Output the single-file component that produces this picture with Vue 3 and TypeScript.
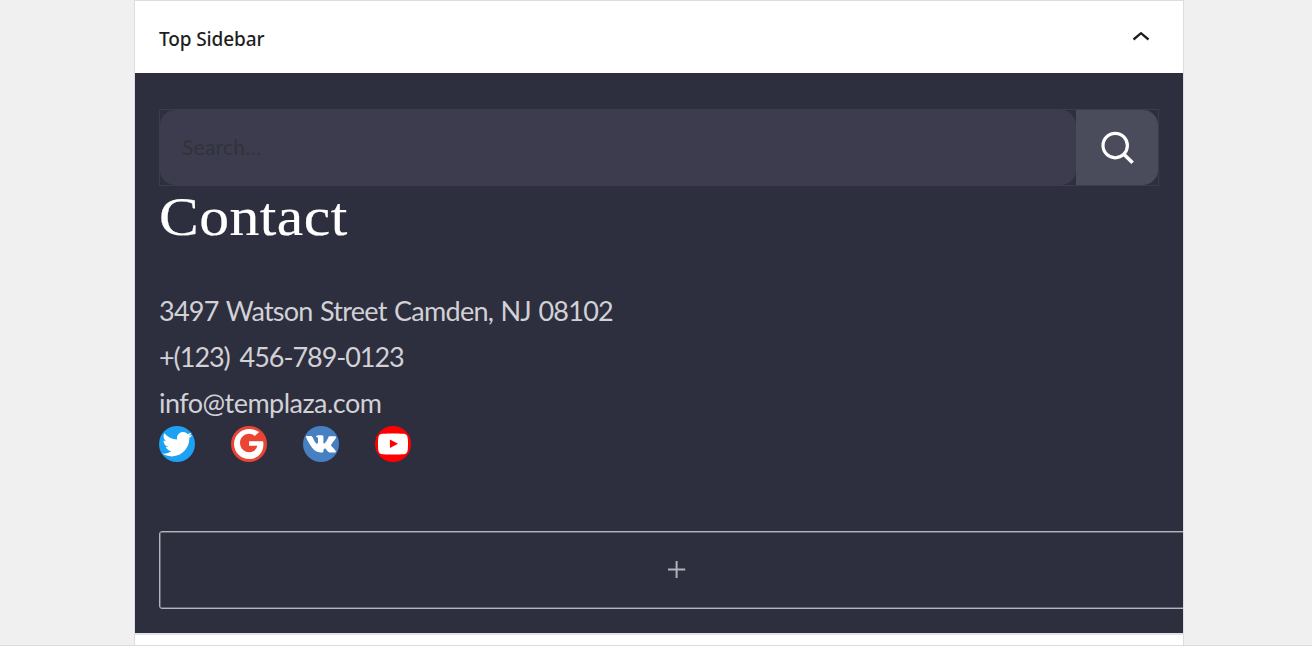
<script setup lang="ts">
interface Social {
  name: string
  color: string
  path: string
}

const contacts: { text: string; kind: string }[] = [
  { text: '3497 Watson Street Camden, NJ 08102', kind: 'address' },
  { text: '+(123) 456-789-0123', kind: 'phone' },
  { text: 'info@templaza.com', kind: 'email' },
]

const socials: Social[] = [
  {
    name: 'Twitter',
    color: '#1da1f2',
    path: 'M22.23,5.924c-0.736,0.326-1.527,0.547-2.357,0.646c0.847-0.508,1.498-1.312,1.804-2.27 c-0.793,0.47-1.671,0.812-2.606,0.996C18.324,4.498,17.257,4,16.077,4c-2.266,0-4.103,1.837-4.103,4.103 c0,0.322,0.036,0.635,0.106,0.935C8.67,8.867,5.647,7.234,3.623,4.751C3.27,5.357,3.067,6.062,3.067,6.814 c0,1.424,0.724,2.679,1.825,3.415c-0.673-0.021-1.305-0.206-1.859-0.513c0,0.017,0,0.034,0,0.052c0,1.988,1.414,3.647,3.292,4.023 c-0.344,0.094-0.707,0.144-1.081,0.144c-0.264,0-0.521-0.026-0.772-0.074c0.522,1.63,2.038,2.816,3.833,2.85 c-1.404,1.1-3.174,1.756-5.096,1.756c-0.331,0-0.658-0.019-0.979-0.057c1.816,1.164,3.973,1.843,6.29,1.843 c7.547,0,11.675-6.252,11.675-11.675c0-0.178-0.004-0.355-0.012-0.531C20.985,7.47,21.68,6.747,22.23,5.924z',
  },
  {
    name: 'Google',
    color: '#ea4434',
    path: 'M12.02,10.18v3.04v0h5.51c-0.26,1.57-1.67,4.22-5.5,4.22c-3.31,0-6.01-2.75-6.01-6.12s2.7-6.12,6.01-6.12 c1.87,0,3.13,0.8,3.85,1.48l2.84-2.76C16.99,2.99,14.73,2,12.03,2c-5.52,0-10,4.48-10,10s4.48,10,10,10c5.77,0,9.6-4.06,9.6-9.77 c0-0.83-0.11-1.42-0.25-2.05H12.02z',
  },
  {
    name: 'VK',
    color: '#4680c2',
    path: 'M22,7.1c0.2,0.4-0.4,1.5-1.6,3.1c-0.2,0.2-0.4,0.5-0.7,0.9c-0.5,0.7-0.9,1.1-0.9,1.4c-0.1,0.3-0.1,0.6,0.1,0.8 c0.1,0.1,0.4,0.4,0.8,0.9h0l0,0c1,0.9,1.6,1.7,2,2.3c0,0,0,0.1,0.1,0.1c0,0.1,0,0.1,0.1,0.3c0,0.1,0,0.2,0,0.4 c0,0.1-0.1,0.2-0.3,0.3c-0.1,0.1-0.4,0.1-0.6,0.1l-2.7,0c-0.2,0-0.4,0-0.6-0.1c-0.2-0.1-0.4-0.1-0.5-0.2l-0.2-0.1 c-0.2-0.1-0.5-0.4-0.7-0.7s-0.5-0.6-0.7-0.8c-0.2-0.2-0.4-0.4-0.6-0.6C14.8,15,14.6,15,14.4,15c0,0,0,0-0.1,0c0,0-0.1,0.1-0.2,0.2 c-0.1,0.1-0.2,0.2-0.2,0.3c-0.1,0.1-0.1,0.3-0.2,0.5c-0.1,0.2-0.1,0.5-0.1,0.8c0,0.1,0,0.2,0,0.3c0,0.1-0.1,0.2-0.1,0.2l0,0.1 c-0.1,0.1-0.3,0.2-0.6,0.2h-1.2c-0.5,0-1,0-1.5-0.2c-0.5-0.1-1-0.3-1.4-0.6s-0.7-0.5-1.1-0.7s-0.6-0.4-0.7-0.6l-0.3-0.3 c-0.1-0.1-0.2-0.2-0.3-0.3s-0.4-0.5-0.7-0.9s-0.7-1-1.1-1.6c-0.4-0.6-0.8-1.3-1.3-2.2C2.9,9.4,2.5,8.5,2.1,7.5C2,7.4,2,7.3,2,7.2 c0-0.1,0-0.1,0-0.2l0-0.1c0.1-0.1,0.3-0.2,0.6-0.2l2.9,0c0.1,0,0.2,0,0.2,0.1S5.9,6.9,5.9,7L6,7c0.1,0.1,0.2,0.2,0.3,0.3 c0.1,0.4,0.3,0.7,0.5,1.1c0.2,0.4,0.3,0.7,0.4,0.8l0.2,0.3c0.2,0.4,0.4,0.8,0.6,1.1c0.2,0.3,0.4,0.5,0.5,0.7s0.3,0.3,0.4,0.4 c0.1,0.1,0.3,0.1,0.4,0.1c0.1,0,0.2,0,0.3-0.1c0,0,0,0,0.1-0.1c0,0,0.1-0.1,0.1-0.2c0.1-0.1,0.1-0.3,0.1-0.5 c0-0.2,0.1-0.5,0.1-0.8c0-0.4,0-0.8,0-1.3c0-0.3,0-0.5-0.1-0.8c0-0.2-0.1-0.4-0.1-0.5L9.6,7.6C9.4,7.3,9.1,7.2,8.7,7.1 C8.6,7.1,8.6,7,8.7,6.9C8.9,6.7,9,6.6,9.1,6.5c0.4-0.2,1.2-0.3,2.5-0.3c0.6,0,1,0.1,1.4,0.1c0.1,0,0.3,0.1,0.3,0.1 c0.1,0.1,0.2,0.1,0.2,0.3c0,0.1,0.1,0.2,0.1,0.3s0,0.3,0,0.5c0,0.2,0,0.4,0,0.6c0,0.2,0,0.4,0,0.7c0,0.3,0,0.6,0,0.9 c0,0.1,0,0.2,0,0.4c0,0.2,0,0.4,0,0.5c0,0.1,0,0.3,0,0.4s0.1,0.3,0.1,0.4c0.1,0.1,0.1,0.2,0.2,0.3c0.1,0,0.1,0,0.2,0 c0.1,0,0.2,0,0.3-0.1c0.1-0.1,0.2-0.2,0.4-0.4s0.3-0.4,0.5-0.7c0.2-0.3,0.5-0.7,0.7-1.1c0.4-0.7,0.8-1.5,1.1-2.3 c0-0.1,0.1-0.1,0.1-0.2c0-0.1,0.1-0.1,0.1-0.1l0,0l0.1,0c0,0,0,0,0.1,0s0.2,0,0.2,0l3,0c0.3,0,0.5,0,0.7,0S21.9,7,21.9,7L22,7.1z',
  },
  {
    name: 'YouTube',
    color: '#ff0000',
    path: 'M21.8,8.001c0,0-0.195-1.378-0.795-1.985c-0.76-0.797-1.613-0.801-2.004-0.847c-2.799-0.202-6.997-0.202-6.997-0.202 h-0.009c0,0-4.198,0-6.997,0.202C4.608,5.216,3.756,5.22,2.995,6.016C2.395,6.623,2.2,8.001,2.2,8.001S2,9.62,2,11.238v1.517 c0,1.618,0.2,3.237,0.2,3.237s0.195,1.378,0.795,1.985c0.761,0.797,1.76,0.771,2.205,0.855c1.6,0.153,6.8,0.201,6.8,0.201 s4.203-0.006,7.001-0.209c0.391-0.047,1.243-0.051,2.004-0.847c0.6-0.607,0.795-1.985,0.795-1.985s0.2-1.618,0.2-3.237v-1.517 C22,9.62,21.8,8.001,21.8,8.001z M9.935,14.594l-0.001-5.62l5.404,2.82L9.935,14.594z',
  },
]
</script>

<template>
  <div class="page">
    <main class="panel">
      <header class="head">
        <h2 class="title">Top Sidebar</h2>
        <svg class="chevron" width="18" height="12" viewBox="0 0 18 12">
          <path d="M1.5 9.5L9 3.2l7.5 6.3" fill="none" stroke="#1e1e1e" stroke-width="2.3" />
        </svg>
      </header>
      <section class="area">
        <div class="search">
          <div class="field">Search…</div>
          <div class="slot">
            <div class="button">
              <svg width="36" height="36" viewBox="0 0 36 36" fill="none" stroke="#fff">
                <circle cx="16.2" cy="15.6" r="12.2" stroke-width="3.2" />
                <path d="M24.6 24l9 8.8" stroke-width="3.6" />
              </svg>
            </div>
          </div>
        </div>
        <h3 class="heading">Contact</h3>
        <div class="contacts">
          <div v-for="c in contacts" :key="c.kind" class="line">
            <span :class="c.kind">{{ c.text }}</span>
          </div>
        </div>
        <div class="socials">
          <span v-for="s in socials" :key="s.name" class="social" :style="{ background: s.color }">
            <svg width="36" height="36" viewBox="0 0 24 24" fill="#fff"><path :d="s.path" /></svg>
          </span>
        </div>
        <div class="appender">
          <svg width="20" height="20" viewBox="0 0 20 20" fill="none" stroke="#b2b2ba" stroke-width="2">
            <path d="M1 9.5h17.2M9.6 0.9v17.2" />
          </svg>
        </div>
      </section>
    </main>
  </div>
</template>

<style>
html,
body {
  background: #fff;
  overflow: hidden;
}
</style>

<style scoped>
.page {
  box-sizing: border-box;
  height: 646px;
  border-bottom: 1px solid #dcdcde;
  background: #f0f0f0;
  display: flex;
  padding-left: 134px;
}
.panel {
  box-sizing: border-box;
  width: 1050px;
  height: 645px;
  border: 1px solid #dddddf;
  border-bottom: 0;
  background: #fff;
}
.head {
  height: 72px;
  padding: 0 33px 0 24px;
  display: flex;
  justify-content: space-between;
}
.title {
  margin: 24px 0 0;
  font: 500 19px/28px "Noto Sans", "Open Sans", sans-serif;
  letter-spacing: -0.12px;
  color: #1e1e1e;
}
.chevron {
  margin-top: 29px;
}
.area {
  box-sizing: border-box;
  height: 562px;
  padding: 36px 24px 0;
  border-bottom: 2px solid #e3e3e6;
  background: #2d2e3e;
  overflow: hidden;
}
.search {
  box-sizing: border-box;
  width: 1000px;
  height: 77px;
  border: 1px solid #3c3c4d;
  display: flex;
}
.field {
  box-sizing: border-box;
  width: 916px;
  height: 75px;
  padding-left: 22px;
  border-radius: 15px;
  background: #3c3c4e;
  color: #303439;
  font: 400 21px/74px Lato, sans-serif;
  letter-spacing: 0.25px;
}
.slot {
  flex: 1;
}
.button {
  height: 75px;
  border-radius: 0 15px 15px 0;
  background: #4b4c5b;
  display: flex;
  align-items: center;
  justify-content: center;
}
.heading {
  margin: 0;
  height: 102px;
  font: 400 55px/62px "Liberation Serif", serif;
  letter-spacing: 0.4px;
  -webkit-text-stroke: 0.2px #fff;
  transform: scaleX(1.085);
  transform-origin: left;
  color: #fff;
}
.contacts {
  height: 138px;
  color: #d1d1d6;
  font: 400 27px/46px Lato, sans-serif;
}
.line {
  height: 46px;
  white-space: nowrap;
}
.address {
  letter-spacing: -0.74px;
  word-spacing: 1.2px;
}
.phone {
  letter-spacing: -1.05px;
  word-spacing: 4px;
}
.email {
  letter-spacing: -0.53px;
}
.socials {
  display: flex;
  gap: 36px;
}
.social {
  width: 36px;
  height: 36px;
  border-radius: 50%;
  display: flex;
}
.appender {
  box-sizing: border-box;
  width: 1036px;
  height: 78px;
  margin-top: 69px;
  border: 1px solid #b4b4bb;
  border-radius: 3px;
  box-shadow: inset 0 0 0 1px #686875;
  display: flex;
  align-items: center;
  justify-content: center;
}
</style>
